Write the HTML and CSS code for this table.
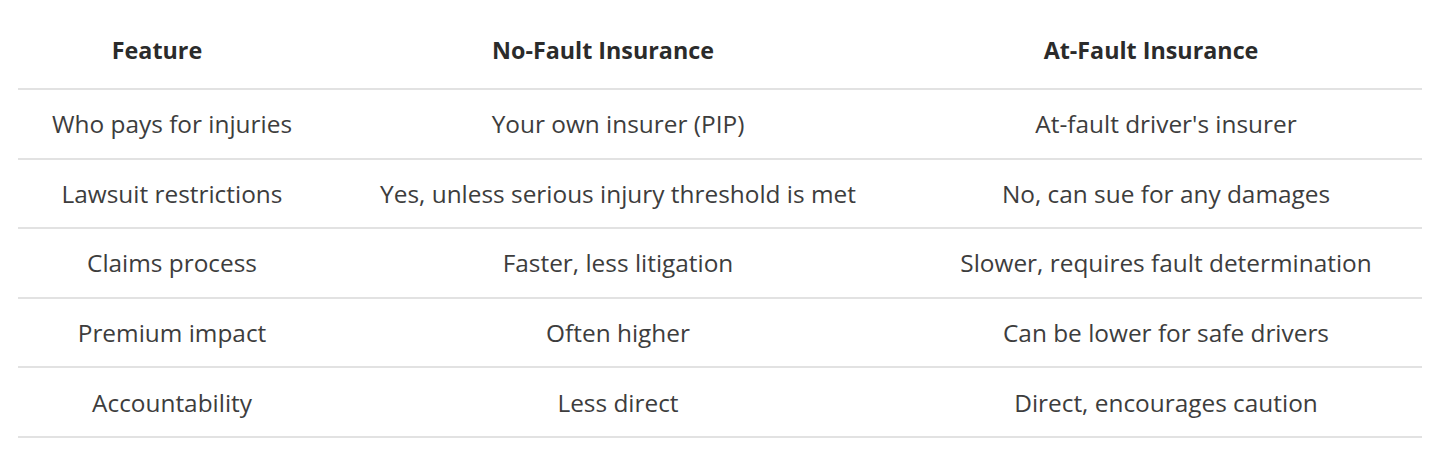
FILE: index.html
```html
<!DOCTYPE html>
<html lang="en">
<head>
<meta charset="utf-8">
<title>No-Fault vs At-Fault Insurance</title>
<link rel="stylesheet" href="styles.css">
</head>
<body>
<div class="wrap">
<table class="compare">
  <colgroup>
    <col class="c1"><col class="c2"><col class="c3">
  </colgroup>
  <thead>
    <tr><th>Feature</th><th>No-Fault Insurance</th><th>At-Fault Insurance</th></tr>
  </thead>
  <tbody>
    <tr><td>Who pays for injuries</td><td>Your own insurer (PIP)</td><td>At-fault driver's insurer</td></tr>
    <tr><td>Lawsuit restrictions</td><td>Yes, unless serious injury threshold is met</td><td>No, can sue for any damages</td></tr>
    <tr><td>Claims process</td><td>Faster, less litigation</td><td>Slower, requires fault determination</td></tr>
    <tr><td>Premium impact</td><td>Often higher</td><td>Can be lower for safe drivers</td></tr>
    <tr><td>Accountability</td><td>Less direct</td><td>Direct, encourages caution</td></tr>
  </tbody>
</table>
</div>
</body>
</html>
```

FILE: styles.css
```css
html, body {
  margin: 0;
  padding: 0;
  background: #ffffff;
}
.wrap {
  padding: 0 18px;
}
.compare {
  width: 1404px;
  border-collapse: collapse;
  table-layout: fixed;
  font-family: "Open Sans", "Noto Sans", sans-serif;
  color: #3d3d3d;
}
.c1 { width: 308px; }
.c2 { width: 584px; }
.c3 { width: 512px; }
.compare th {
  font-weight: 700;
  font-size: 23.3px;
  color: #2b2b2b;
  height: 89px;
  padding: 12px 30px 0 0;
  box-sizing: border-box;
  text-align: center;
  border-bottom: 2px solid #e2e2e2;
}
.compare td {
  font-size: 24.4px;
  text-align: center;
  height: 69.6px;
  padding: 0;
  box-sizing: border-box;
  border-bottom: 2px solid #e2e2e2;
}
```
